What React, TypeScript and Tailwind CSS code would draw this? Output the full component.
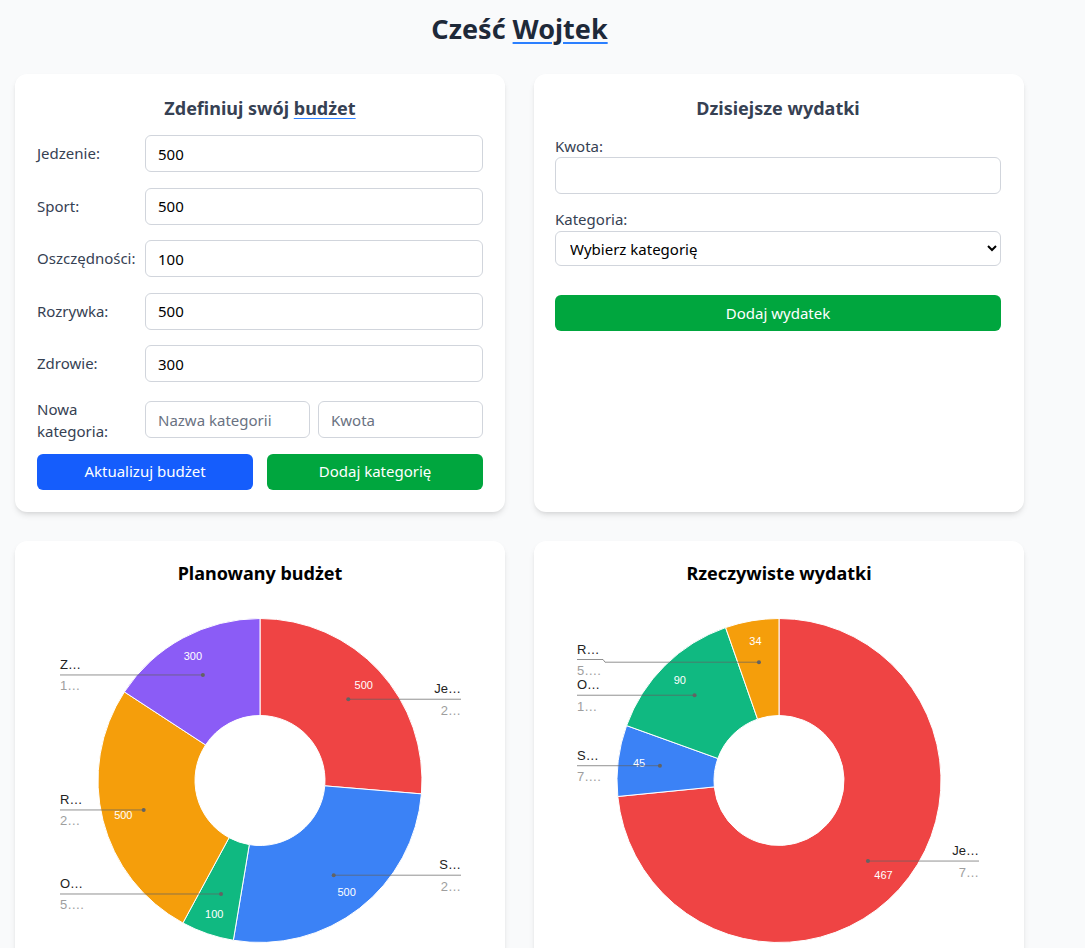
import React from 'react';

type Slice = {
  value: number;
  color: string;
  name: string;
  pct: string;
  labelY?: number;
};

const planned: Slice[] = [
  { value: 500, color: '#ef4444', name: 'Je…', pct: '2…' },
  { value: 500, color: '#3b82f6', name: 'S…', pct: '2…' },
  { value: 100, color: '#10b981', name: 'O…', pct: '5….' },
  { value: 500, color: '#f59e0b', name: 'R…', pct: '2…' },
  { value: 300, color: '#8b5cf6', name: 'Z…', pct: '1…' },
];

const actual: Slice[] = [
  { value: 467, color: '#ef4444', name: 'Je…', pct: '7…' },
  { value: 45, color: '#3b82f6', name: 'S…', pct: '7….' },
  { value: 90, color: '#10b981', name: 'O…', pct: '1…' },
  { value: 34, color: '#f59e0b', name: 'R…', pct: '5….', labelY: 60.5 },
];

const CX = 245;
const CY = 181.5;
const R_OUT = 162;
const R_IN = 65;

const pt = (a: number, r: number): [number, number] => {
  const rad = (a * Math.PI) / 180;
  return [CX + r * Math.sin(rad), CY - r * Math.cos(rad)];
};

const arcPath = (a0: number, a1: number) => {
  const large = a1 - a0 > 180 ? 1 : 0;
  const [x0, y0] = pt(a0, R_OUT);
  const [x1, y1] = pt(a1, R_OUT);
  const [x2, y2] = pt(a1, R_IN);
  const [x3, y3] = pt(a0, R_IN);
  return `M${x0} ${y0} A${R_OUT} ${R_OUT} 0 ${large} 1 ${x1} ${y1} L${x2} ${y2} A${R_IN} ${R_IN} 0 ${large} 0 ${x3} ${y3} Z`;
};

const Donut = ({ data, leftX, rightX }: { data: Slice[]; leftX: number; rightX: number }) => {
  const total = data.reduce((s, d) => s + d.value, 0);
  let acc = 0;
  const slices = data.map((d) => {
    const a0 = (acc / total) * 360;
    acc += d.value;
    const a1 = (acc / total) * 360;
    return { ...d, a0, a1, mid: (a0 + a1) / 2 };
  });

  return (
    <svg viewBox="0 0 490 400" className="block h-[400px] w-full" fontFamily="'Liberation Sans', Arial, sans-serif">
      {slices.map((s, i) => (
        <path key={i} d={arcPath(s.a0, s.a1)} fill={s.color} stroke="#ffffff" strokeWidth={1} />
      ))}
      {slices.map((s, i) => {
        const [tx, ty] = pt(s.mid, 141);
        return (
          <text key={i} x={tx} y={ty + 4} fill="#ffffff" fontSize={11} textAnchor="middle">
            {s.value}
          </text>
        );
      })}
      {slices.map((s, i) => {
        const [dx, dy] = pt(s.mid, 120);
        const right = s.mid < 180;
        const ly = s.labelY ?? dy;
        const endX = right ? rightX : leftX;
        const points =
          ly === dy
            ? `${dx},${dy} ${endX},${dy}`
            : `${dx},${dy} ${leftX + 28},${dy} ${leftX + 26},${ly} ${endX},${ly}`;
        return (
          <g key={i}>
            <polyline points={points} fill="none" stroke="#636363" strokeOpacity={0.7} strokeWidth={1} />
            <circle cx={dx} cy={dy} r={2} fill="#636363" />
            <text x={endX} y={ly - 6} fontSize={13} fill="#222222" textAnchor={right ? 'end' : 'start'}>
              {s.name}
            </text>
            <text x={endX} y={ly + 15.5} fontSize={13} fill="#9e9e9e" textAnchor={right ? 'end' : 'start'}>
              {s.pct}
            </text>
          </g>
        );
      })}
    </svg>
  );
};

const inputCls =
  'h-[37px] w-full rounded-md border border-gray-300 bg-white px-3 text-[15px] text-black outline-none placeholder:text-gray-500';

const budgetRows = [
  { label: 'Jedzenie:', value: '500' },
  { label: 'Sport:', value: '500' },
  { label: 'Oszczędności:', value: '100' },
  { label: 'Rozrywka:', value: '500' },
  { label: 'Zdrowie:', value: '300' },
];

export default function App() {
  return (
    <div className="min-h-screen bg-gray-50 font-['Noto_Sans',sans-serif]">
      <div className="w-[1039px] px-[15px] pt-[10px]">
        <h1 className="text-center text-[27px] leading-[38px] font-bold text-gray-800">
          Cześć{' '}
          <span className="underline decoration-blue-500 decoration-2 underline-offset-[3px]">Wojtek</span>
        </h1>

        <div className="mt-[26px] grid grid-cols-2 gap-[29px]">
          {/* Budget definition */}
          <div className="rounded-xl bg-white px-[22px] pt-5 pb-[22px] shadow-md">
            <h2 className="mb-[13px] text-center text-lg font-bold text-gray-700">
              Zdefiniuj swój <span className="underline decoration-blue-500 underline-offset-[3px]">budżet</span>
            </h2>
            <div className="flex flex-col gap-[15.5px]">
              {budgetRows.map((r) => (
                <div key={r.label} className="flex items-center">
                  <label className="w-[108px] shrink-0 text-[15px] text-gray-700">{r.label}</label>
                  <input className={inputCls} defaultValue={r.value} />
                </div>
              ))}
              <div className="flex items-center">
                <label className="w-[108px] shrink-0 text-[15px] leading-[22px] text-gray-700">
                  Nowa
                  <br />
                  kategoria:
                </label>
                <div className="flex w-full gap-2">
                  <input className={inputCls} placeholder="Nazwa kategorii" />
                  <input className={inputCls} placeholder="Kwota" />
                </div>
              </div>
            </div>
            <div className="mt-3 flex gap-3.5">
              <button className="h-9 flex-1 rounded-md bg-blue-600 text-[15px] text-white">Aktualizuj budżet</button>
              <button className="h-9 flex-1 rounded-md bg-green-600 text-[15px] text-white">Dodaj kategorię</button>
            </div>
          </div>

          {/* Today's expenses */}
          <div className="rounded-xl bg-white pt-5 pr-[23px] pb-[22px] pl-[21px] shadow-md">
            <h2 className="mb-[13px] text-center text-lg font-bold text-gray-700">Dzisiejsze wydatki</h2>
            <label className="block text-[15px] leading-[22px] text-gray-700">Kwota:</label>
            <input className={inputCls} />
            <label className="mt-[14px] block text-[15px] leading-[22px] text-gray-700">Kategoria:</label>
            <select className="mt-px h-[35px] w-full rounded-md border border-gray-300 bg-white px-[10px] text-[15px] text-black outline-none">
              <option>Wybierz kategorię</option>
            </select>
            <button className="mt-[29px] h-9 w-full rounded-md bg-green-600 text-[15px] text-white">Dodaj wydatek</button>
          </div>

          {/* Planned budget chart */}
          <div className="rounded-xl bg-white pt-[18px] shadow-md">
            <h2 className="mb-3 text-center text-lg font-bold text-black">Planowany budżet</h2>
            <Donut data={planned} leftX={45} rightX={446} />
          </div>

          {/* Actual expenses chart */}
          <div className="rounded-xl bg-white pt-[18px] shadow-md">
            <h2 className="mb-3 text-center text-lg font-bold text-black">Rzeczywiste wydatki</h2>
            <Donut data={actual} leftX={43} rightX={445} />
          </div>
        </div>
      </div>
    </div>
  );
}
